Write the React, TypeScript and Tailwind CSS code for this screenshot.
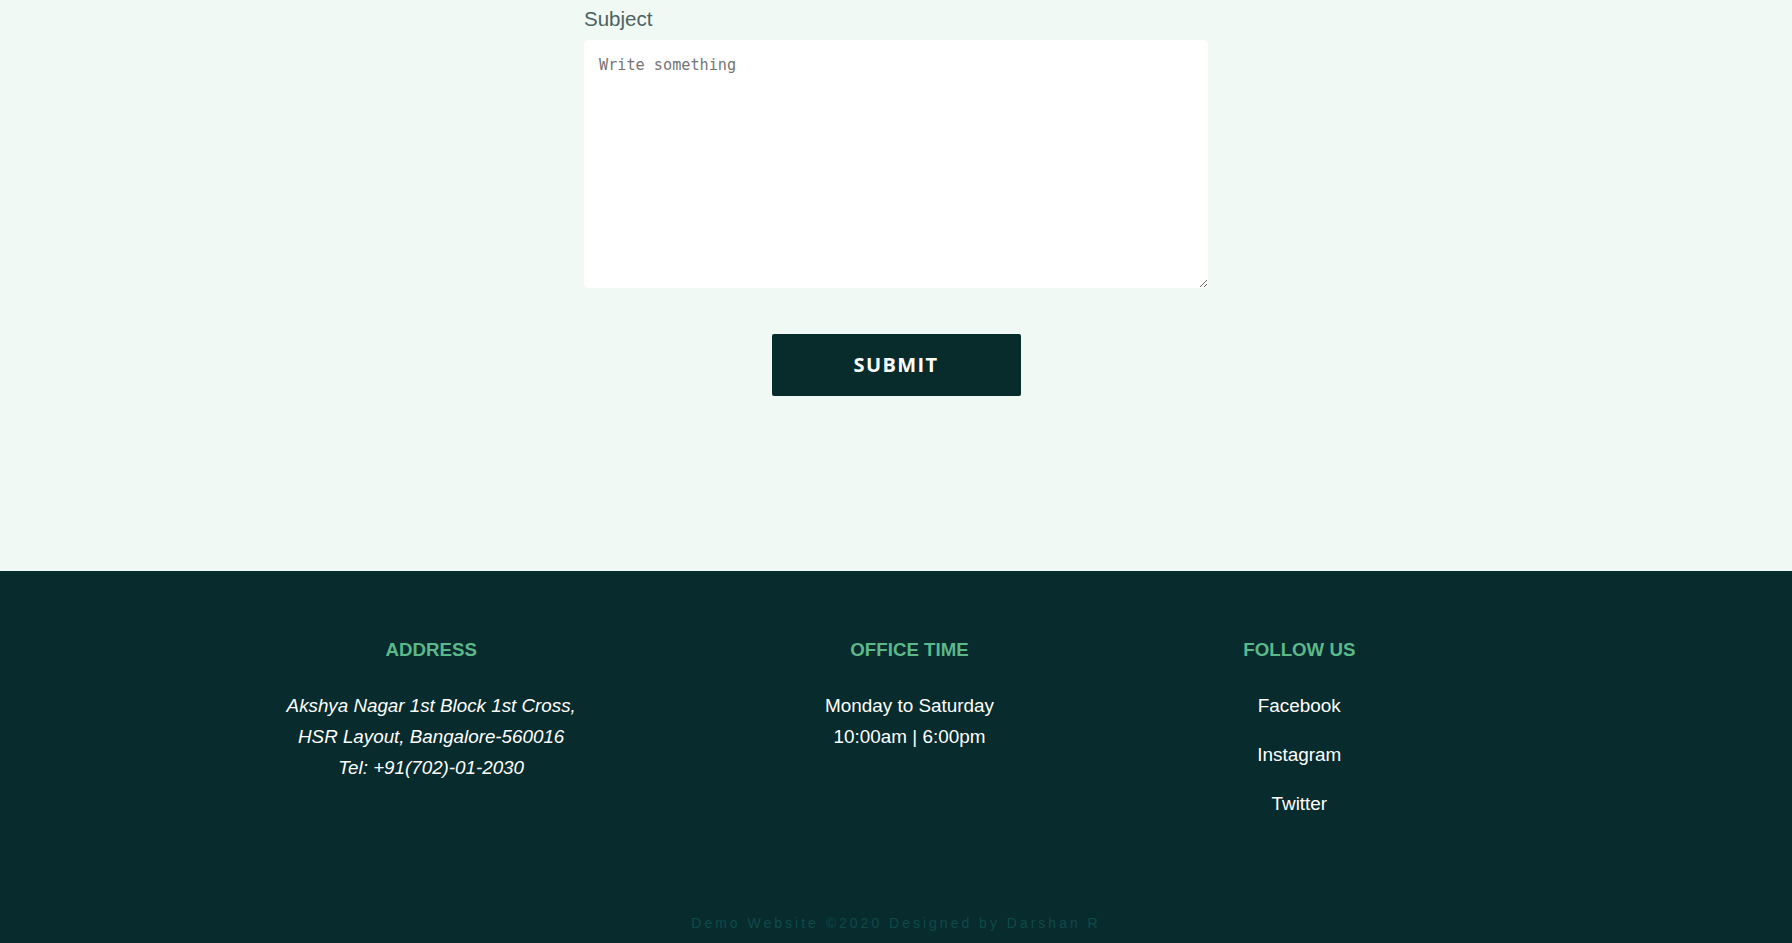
export default function App() {
  return (
    <div className="min-h-screen bg-[#f0f9f4] font-['Liberation_Sans',Arial,sans-serif]">
      <section className="pt-[7px] pb-[175px]">
        <form
          className="w-[624px] mx-auto flex flex-col"
          onSubmit={(e) => e.preventDefault()}
        >
          <label
            htmlFor="subject"
            className="text-[20.5px] leading-[24px] text-[#4b6262]"
          >
            Subject
          </label>
          <textarea
            id="subject"
            placeholder="Write something"
            className="mt-[9px] h-[248px] w-full bg-white rounded-[4px] px-[15px] pt-[16px] pb-[14px] font-['DejaVu_Sans_Mono',monospace] text-[15.2px] leading-[18px] text-[#333] placeholder:text-[#757575] outline-none"
          />
          <div className="flex justify-center mt-[46px]">
            <button
              type="submit"
              className="w-[249px] h-[62px] bg-[#082b2c] text-white font-['Open_Sans',sans-serif] font-bold text-[20px] tracking-[1.4px] rounded-[2px]"
            >
              SUBMIT
            </button>
          </div>
        </form>
      </section>

      <footer className="bg-[#082b2d] pt-[68px] pb-[12px]">
        <div className="w-[1318px] ml-[162px] flex justify-around text-center">
          <div>
            <h3 className="text-[18.7px] leading-[21px] font-bold text-[#5cb88a]">ADDRESS</h3>
            <p className="mt-[30px] text-[18.8px] leading-[31px] italic text-white">
              Akshya Nagar 1st Block 1st Cross,
              <br />
              HSR Layout, Bangalore-560016
              <br />
              Tel: +91(702)-01-2030
            </p>
          </div>
          <div>
            <h3 className="text-[18.7px] leading-[21px] font-bold text-[#5cb88a]">OFFICE TIME</h3>
            <p className="mt-[30px] text-[18.9px] leading-[31px] text-white">
              Monday to Saturday
              <br />
              10:00am | 6:00pm
            </p>
          </div>
          <div>
            <h3 className="text-[18.7px] leading-[21px] font-bold text-[#5cb88a]">FOLLOW US</h3>
            <ul className="mt-[30px] text-[18.9px] leading-[31px] text-white flex flex-col gap-[18px]">
              <li><a href="#">Facebook</a></li>
              <li><a href="#">Instagram</a></li>
              <li><a href="#">Twitter</a></li>
            </ul>
          </div>
        </div>
        <p className="mt-[96px] text-center text-[14px] leading-[16px] tracking-[3px] text-[#0e4a4a]">
          Demo Website ©2020 Designed by Darshan R
        </p>
      </footer>
    </div>
  );
}
